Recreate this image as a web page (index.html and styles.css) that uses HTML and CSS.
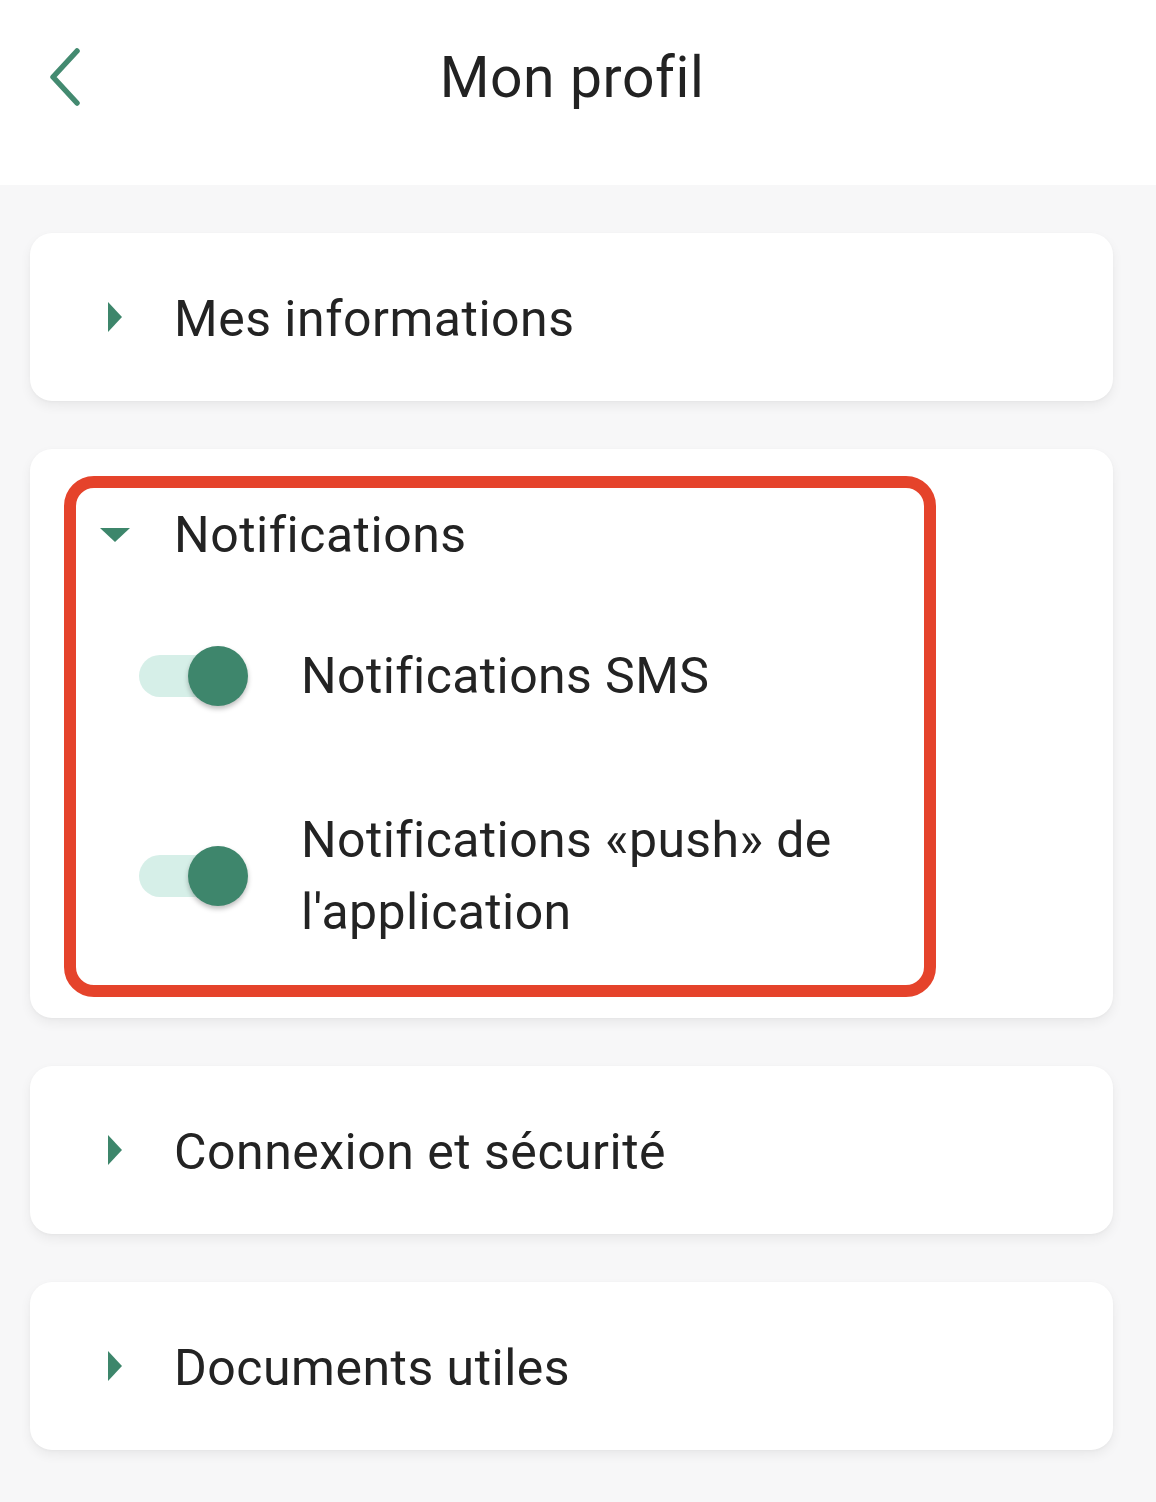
FILE: index.html
```html
<!DOCTYPE html>
<html lang="fr">
<head>
<meta charset="utf-8">
<title>Mon profil</title>
<link rel="stylesheet" href="styles.css">
</head>
<body>
<header class="topbar">
  <button class="back" aria-label="Retour">
    <svg width="40" height="60" viewBox="0 0 40 60"><path d="M31 3 L7 29 L31 55" fill="none" stroke="#438a70" stroke-width="5.5" stroke-linecap="round" stroke-linejoin="round"/></svg>
  </button>
  <h1 class="title">Mon profil</h1>
</header>
<main class="content">
  <section class="card">
    <div class="card-head">
      <span class="tri tri-right"></span>
      <span class="card-label">Mes informations</span>
    </div>
  </section>
  <section class="card card-open">
    <div class="highlight">
      <div class="open-head">
        <span class="tri tri-down"></span>
        <span class="card-label">Notifications</span>
      </div>
      <div class="toggle-row first">
        <span class="switch"><span class="track"></span><span class="thumb"></span></span>
        <span class="toggle-label">Notifications SMS</span>
      </div>
      <div class="toggle-row">
        <span class="switch"><span class="track"></span><span class="thumb"></span></span>
        <span class="toggle-label">Notifications «push» de<br>l'application</span>
      </div>
    </div>
  </section>
  <section class="card">
    <div class="card-head">
      <span class="tri tri-right"></span>
      <span class="card-label">Connexion et sécurité</span>
    </div>
  </section>
  <section class="card">
    <div class="card-head">
      <span class="tri tri-right"></span>
      <span class="card-label">Documents utiles</span>
    </div>
  </section>
</main>
</body>
</html>
```
FILE: styles.css
```css
* { box-sizing: border-box; }
html, body { margin: 0; padding: 0; }
body {
  width: 1156px;
  min-height: 1502px;
  background: #f7f7f8;
  font-family: Roboto, "Noto Sans", "Liberation Sans", sans-serif;
  color: #232323;
}
.topbar {
  height: 185px;
  background: #ffffff;
  display: flex;
  align-items: flex-start;
  justify-content: center;
  padding-right: 12px;
  position: relative;
}
.back {
  position: absolute;
  left: 46px;
  top: 48px;
  border: 0;
  background: none;
  padding: 0;
  width: 40px;
  height: 60px;
}
.back svg { display: block; }
.title {
  margin: 43px 0 0 0;
  font-weight: 400;
  font-size: 57px;
  line-height: 70px;
  letter-spacing: 0.6px;
  color: #222;
}
.content {
  padding: 48px 43px 0 30px;
  display: flex;
  flex-direction: column;
  gap: 48px;
}
.card {
  background: #fff;
  border-radius: 22px;
  box-shadow: 0 5px 12px rgba(0,0,0,0.06), 0 1px 3px rgba(0,0,0,0.03);
}
.card-head {
  height: 168px;
  display: flex;
  align-items: center;
  padding-left: 78px;
  padding-top: 3px;
}
.tri { display: inline-block; width: 0; height: 0; flex: none; }
.tri-right {
  border-top: 15px solid transparent;
  border-bottom: 15px solid transparent;
  border-left: 14px solid #3d866b;
  margin-right: 52px;
  margin-top: -3px;
}
.tri-down {
  border-left: 15px solid transparent;
  border-right: 15px solid transparent;
  border-top: 14px solid #3d866b;
  margin-right: 44px;
}
.card-label {
  font-size: 50px;
  line-height: 72px;
  letter-spacing: 0.5px;
}
.card-open {
  padding: 27px 0 21px 34px;
}
.highlight {
  width: 872px;
  border: 12px solid #e5432b;
  border-radius: 30px;
  padding: 11px 0 37px 24px;
}
.open-head {
  display: flex;
  align-items: center;
  height: 72px;
}
.toggle-row {
  display: flex;
  align-items: center;
  margin-top: 92px;
  padding-left: 39px;
}
.toggle-row.first { margin-top: 69px; }
.switch {
  position: relative;
  width: 110px;
  height: 60px;
  flex: none;
  margin-right: 52px;
}
.track {
  position: absolute;
  left: 0;
  top: 9px;
  width: 102px;
  height: 42px;
  border-radius: 21px;
  background: #d6efe8;
}
.thumb {
  position: absolute;
  left: 49px;
  top: 0;
  width: 60px;
  height: 60px;
  border-radius: 50%;
  background: #3e866c;
  box-shadow: 0 3px 5px rgba(0,0,0,0.25);
}
.toggle-label {
  font-size: 50px;
  line-height: 72px;
  letter-spacing: 0.4px;
}
```
